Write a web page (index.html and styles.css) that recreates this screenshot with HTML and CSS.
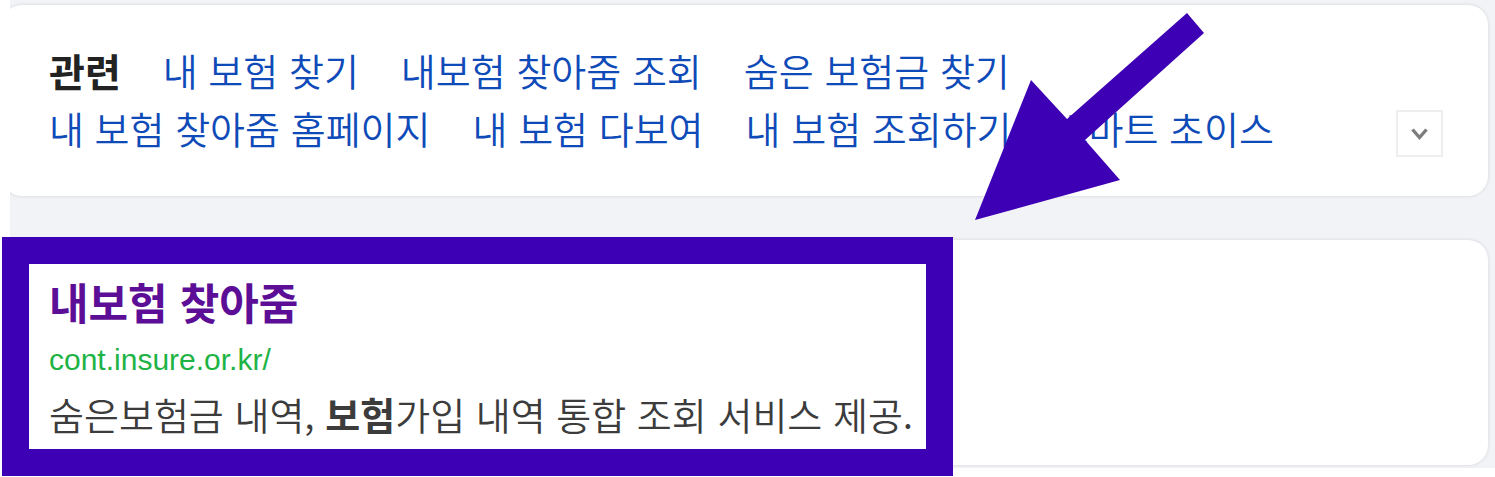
FILE: index.html
```html
<!DOCTYPE html>
<html lang="ko">
<head>
    <meta charset="UTF-8">
    <meta name="viewport" content="width=device-width, initial-scale=1.0">
    <title>내보험 찾아줌</title>
    <link rel="stylesheet" href="styles.css">
</head>
<body>

<main class="results">
    <section class="card related">
        <div class="related-list">
            <h2>관련</h2>
            <a href="#">내 보험 찾기</a>
            <a href="#">내보험 찾아줌 조회</a>
            <a href="#">숨은 보험금 찾기</a>
            <a href="#">내 보험 찾아줌 홈페이지</a>
            <a href="#">내 보험 다보여</a>
            <a href="#">내 보험 조회하기</a>
            <a href="#">스마트 초이스</a>
        </div>
        <button class="more-button" type="button" aria-label="더보기">
            <svg width="20" height="14" viewBox="0 0 20 14">
                <path d="M2.5 2.5l7 8 7-8" fill="none" stroke="#7d7d7d" stroke-width="3.4"/>
            </svg>
        </button>
    </section>

    <section class="card site">
        <h3><a href="#" class="site-title">내보험 찾아줌</a></h3>
        <a href="#" class="site-url">cont.insure.or.kr/</a>
        <p class="site-desc">숨은보험금 내역, <strong>보험</strong>가입 내역 통합 조회 서비스 제공.</p>
    </section>
</main>

<!-- highlight over the first result -->
<div class="highlight-frame"></div>
<svg class="highlight-arrow" width="230" height="208" viewBox="0 0 230 208">
    <polygon points="0,207 56,67 92,106 212,0 229,20 110,127 145,167" fill="#3d00b5"/>
</svg>

</body>
</html>
```
FILE: styles.css
```css
* {
    margin: 0;
    padding: 0;
    box-sizing: border-box;
}

body {
    position: relative;
    font-family: 'Noto Sans CJK KR', sans-serif;
    background-color: #fff;
    color: #222;
    padding: 0 0 9px 10px;
}

a {
    text-decoration: none;
}

.results {
    display: flex;
    flex-direction: column;
    gap: 44px;
    padding: 5px 7px 3px 0;
    background-color: #f2f3f7;
    overflow: hidden;
}

.card {
    margin-left: -8px;
    background-color: #fff;
    border-radius: 20px;
    box-shadow: 0 0 3px 1px rgba(0, 0, 0, 0.08);
}

.related {
    display: flex;
    align-items: flex-end;
    justify-content: space-between;
    padding: 36px 45px 39px 47px;
}

.related-list {
    display: flex;
    flex-wrap: wrap;
    column-gap: 42px;
    font-size: 38px;
    line-height: 58px;
}

.related-list h2 {
    font-size: 39px;
    font-weight: bold;
}

.related-list a {
    color: #0f4bb8;
    font-weight: 350;
}

.more-button {
    display: flex;
    flex-shrink: 0;
    align-items: center;
    justify-content: center;
    width: 47px;
    height: 47px;
    background-color: #fff;
    border: 2px solid #eee;
    cursor: pointer;
}

.site {
    padding: 33px 47px 28px;
}

.site-title {
    display: block;
    color: #5c0f96;
    font-size: 43px;
    font-weight: bold;
    line-height: 56px;
}

.site-url {
    display: block;
    color: #1eb345;
    font-family: 'Liberation Sans', Arial, sans-serif;
    font-size: 30px;
    line-height: 62px;
}

.site-desc {
    color: #3c3c3c;
    font-size: 38px;
    font-weight: 350;
    line-height: 46px;
}

.site-desc strong {
    font-weight: bold;
}

.highlight-frame {
    position: absolute;
    top: 237px;
    left: 2px;
    width: 951px;
    height: 239px;
    border: 27px solid #3d00b5;
    pointer-events: none;
}

.highlight-arrow {
    position: absolute;
    top: 13px;
    left: 975px;
    pointer-events: none;
}
```
